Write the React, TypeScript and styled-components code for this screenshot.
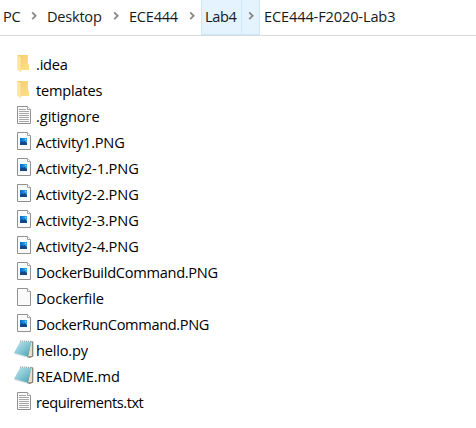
import React from "react";
import styled, { createGlobalStyle } from "styled-components";

const GlobalStyle = createGlobalStyle`
  * { box-sizing: border-box; }
  body { margin: 0; background: #fff; color: #000; font-family: "Open Sans", "Noto Sans", sans-serif; font-size: 14.6px; }
`;

const Window = styled.main`
  width: 476px;
  height: 428px;
  overflow: hidden;
  background: #fff;
`;

const AddressBar = styled.nav`
  display: flex;
  height: 36px;
  border-bottom: 1px solid #d9d9d9;
`;

const Crumb = styled.div<{ $width: number; $active?: boolean; $inset?: number; $tracking: number }>`
  flex: none;
  width: ${(p) => p.$width}px;
  height: 35px;
  padding-left: ${(p) => p.$inset ?? 4}px;
  line-height: 33px;
  white-space: nowrap;
  letter-spacing: ${(p) => p.$tracking}px;
  color: #191919;
  background: ${(p) => (p.$active ? "#e5f3ff" : "transparent")};
  border: 0 solid #cce8ff;
  border-width: ${(p) => (p.$active ? "0 0 1px 1px" : "0")};
`;

const Separator = styled.div<{ $width: number; $active?: boolean }>`
  flex: none;
  display: flex;
  justify-content: center;
  width: ${(p) => p.$width}px;
  height: 35px;
  padding-top: 11px;
  background: ${(p) => (p.$active ? "#e5f3ff" : "transparent")};
  border: 0 solid #cce8ff;
  border-width: ${(p) => (p.$active ? "0 1px 1px 1px" : "0")};
`;

const FileList = styled.ul`
  list-style: none;
  margin: 0;
  padding: 15px 0 0 16px;
`;

const FileRow = styled.li`
  display: flex;
  align-items: center;
  height: 26px;
`;

const IconSlot = styled.span`
  flex: none;
  width: 20px;
  height: 20px;
  svg { display: block; overflow: visible; }
`;

const FileName = styled.span<{ $tracking: number }>`
  line-height: 26px;
  white-space: nowrap;
  letter-spacing: ${(p) => p.$tracking}px;
`;

const Chevron = () => (
  <svg width="8" height="10" viewBox="0 0 8 10" fill="none">
    <path d="M2.2 1.4 5.6 4.8 2.2 8.2" stroke="#8a8a8a" strokeWidth="1.9" />
  </svg>
);

const FolderIcon = () => (
  <svg width="20" height="20" viewBox="0 0 20 20">
    <defs>
      <linearGradient id="folder" x1="0" y1="0" x2="1" y2="1">
        <stop offset="0" stopColor="#f2cd6b" />
        <stop offset="1" stopColor="#ffe08a" />
      </linearGradient>
    </defs>
    <path d="M1 1h11v9l1 1v5H2z" fill="url(#folder)" />
    <path d="M1 1 4.8 3.3V18L1 16z" fill="#ffe8a6" />
    <path d="M4.8 3.3V18" stroke="#f5d88c" strokeWidth=".6" />
  </svg>
);

const Sheet = () => (
  <>
    <path d="M1.5.5h10l3 3v14h-13z" fill="#fafafa" stroke="#929292" />
    <path d="M11.5.5v3h3" fill="#fff" stroke="#a5a5a5" />
  </>
);

const PageIcon = () => (
  <svg width="20" height="20" viewBox="0 0 20 20"><Sheet /></svg>
);

const TextIcon = () => (
  <svg width="20" height="20" viewBox="0 0 20 20">
    <Sheet />
    <path d="M3 3.5h7M3 5.5h10M3 7.5h10M3 9.5h10M3 11.5h10M3 13.5h10M3 15.5h10" stroke="#a8a8a8" />
  </svg>
);

const ImageIcon = () => (
  <svg width="20" height="20" viewBox="0 0 20 20">
    <defs>
      <linearGradient id="sky" x1="0" y1="0" x2="1" y2="0">
        <stop offset="0" stopColor="#0869ce" />
        <stop offset="1" stopColor="#36aee8" />
      </linearGradient>
    </defs>
    <Sheet />
    <path d="M4 6h7v7H4z" fill="url(#sky)" />
    <path d="m4 11 2-2 1.5 1 1-1 2.5 2v2H4z" fill="#174685" />
    <path d="M9 7h1v1H9z" fill="#91d5f8" />
  </svg>
);

const NotebookIcon = () => (
  <svg width="20" height="20" viewBox="0 0 20 20">
    <defs>
      <linearGradient id="cover" x1="0" y1="0" x2="1" y2="1">
        <stop offset="0" stopColor="#c4e9ee" />
        <stop offset=".55" stopColor="#7ec2d0" />
        <stop offset="1" stopColor="#3f9eb5" />
      </linearGradient>
    </defs>
    <path d="m15.5 1 1.8.8v14.7l-3.5 1.4-3-1z" fill="#7f7d70" />
    <path d="m15.2 2 .9.5v13.6l-4 .5z" fill="#e8dfca" />
    <path d="M4.2 1.5 15.3 2 11.5 17.2-2 13z" fill="url(#cover)" />
    <path d="m-2 12.7 13 3.6.4 1.2L-1.4 14z" fill="#cbd9dc" />
    <path d="m4.2 1 11.6.5" stroke="#83999a" strokeWidth="1.3" strokeDasharray="1 1" />
  </svg>
);

const icons = { folder: FolderIcon, page: PageIcon, text: TextIcon, image: ImageIcon, notebook: NotebookIcon };

const files: { name: string; kind: keyof typeof icons; tracking: number }[] = [
  { name: ".idea", kind: "folder", tracking: -0.2 },
  { name: "templates", kind: "folder", tracking: -0.2 },
  { name: ".gitignore", kind: "text", tracking: -0.05 },
  { name: "Activity1.PNG", kind: "image", tracking: -0.2 },
  { name: "Activity2-1.PNG", kind: "image", tracking: -0.1 },
  { name: "Activity2-2.PNG", kind: "image", tracking: -0.1 },
  { name: "Activity2-3.PNG", kind: "image", tracking: -0.1 },
  { name: "Activity2-4.PNG", kind: "image", tracking: -0.1 },
  { name: "DockerBuildCommand.PNG", kind: "image", tracking: -0.28 },
  { name: "Dockerfile", kind: "page", tracking: -0.07 },
  { name: "DockerRunCommand.PNG", kind: "image", tracking: -0.36 },
  { name: "hello.py", kind: "notebook", tracking: -0.2 },
  { name: "README.md", kind: "notebook", tracking: -0.07 },
  { name: "requirements.txt", kind: "text", tracking: -0.45 },
];

export default function App() {
  return (
    <Window>
      <GlobalStyle />
      <AddressBar>
        <Crumb $width={24} $inset={3} $tracking={-0.2}>PC</Crumb>
        <Separator $width={19}><Chevron /></Separator>
        <Crumb $width={63} $tracking={-0.25}>Desktop</Crumb>
        <Separator $width={19}><Chevron /></Separator>
        <Crumb $width={57} $tracking={-0.25}>ECE444</Crumb>
        <Separator $width={19}><Chevron /></Separator>
        <Crumb $width={40} $inset={3} $active $tracking={-0.35}>Lab4</Crumb>
        <Separator $width={19} $active><Chevron /></Separator>
        <Crumb $width={150} $inset={4} $tracking={-0.14}>ECE444-F2020-Lab3</Crumb>
      </AddressBar>
      <FileList>
        {files.map(({ name, kind, tracking }) => {
          const Icon = icons[kind];
          return (
            <FileRow key={name}>
              <IconSlot><Icon /></IconSlot>
              <FileName $tracking={tracking}>{name}</FileName>
            </FileRow>
          );
        })}
      </FileList>
    </Window>
  );
}
